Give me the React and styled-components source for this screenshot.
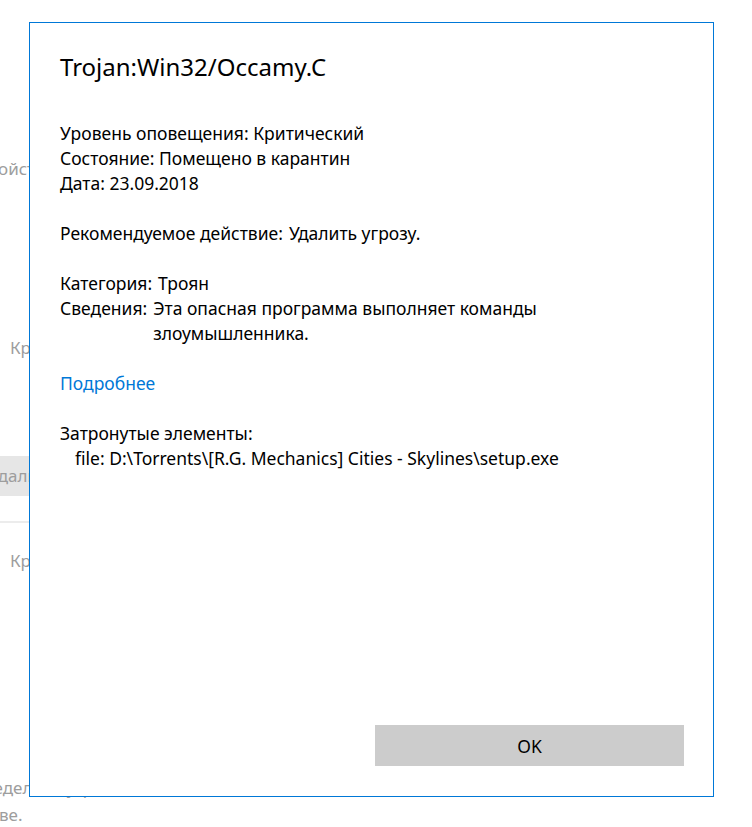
import React from "react"
import styled, { createGlobalStyle } from "styled-components"

const GlobalStyle = createGlobalStyle`
  html, body {
    margin: 0;
    padding: 0;
    background: #ffffff;
  }
  body {
    font-family: "Noto Sans", "Open Sans", "Liberation Sans", sans-serif;
  }
`

const Screen = styled.div`
  position: relative;
  width: 752px;
  height: 827px;
  overflow: hidden;
  background: #ffffff;
`

/* the window that sits behind the dialog */
const Backdrop = styled.div`
  display: flex;
  flex-direction: column;
  width: 300px;
  padding-top: 158px;
`

const BackText = styled.div`
  font-size: 17px;
  line-height: 22px;
  color: #9d9d9d;
  white-space: nowrap;
  margin-top: ${(p) => p.$gap || 0}px;
  margin-left: ${(p) => p.$indent || 0}px;
`

const BackBand = styled.div`
  margin-top: ${(p) => p.$gap || 0}px;
  height: 40px;
  display: flex;
  align-items: center;
  background: #e6e6e6;
`

const BackRule = styled.div`
  margin-top: ${(p) => p.$gap || 0}px;
  height: 2px;
  background: #ececec;
`

const Dialog = styled.div`
  position: absolute;
  left: 29px;
  top: 22px;
  width: 685px;
  height: 775px;
  box-sizing: border-box;
  border: 1px solid #0078d7;
  background: #ffffff;
  padding: 28px 29px 30px 30px;
  display: flex;
  flex-direction: column;
  color: #000000;
`

const Title = styled.h1`
  margin: 0;
  font-size: 24px;
  font-weight: 400;
  line-height: 32px;
`

const Body = styled.div`
  margin-top: 38px;
  font-size: 17.5px;
  line-height: 25px;
  display: flex;
  flex-direction: column;
  gap: 25px;
`

const Section = styled.div`
  display: flex;
  flex-direction: column;
`

const Field = styled.div`
  display: flex;
  align-items: flex-start;
  gap: 6px;
  padding-left: ${(p) => p.$indent || 0}px;
`

const Value = styled.span`
  max-width: 440px;
`

const Link = styled.a`
  color: #0078d7;
  text-decoration: none;
  cursor: pointer;
  align-self: flex-start;
`

const Footer = styled.div`
  margin-top: auto;
  display: flex;
  justify-content: flex-end;
`

const OkButton = styled.button`
  width: 309px;
  height: 41px;
  border: none;
  background: #cccccc;
  color: #000000;
  font-family: inherit;
  font-size: 17.5px;
  cursor: pointer;
  &:hover {
    background: #b8b8b8;
  }
`

export default function App() {
  return (
    <Screen>
      <GlobalStyle />
      <Backdrop>
        <BackText $indent={-38}>Устройство</BackText>
        <BackText $gap={157} $indent={10}>Критический</BackText>
        <BackBand $gap={97}>
          <BackText $indent={-11}>Удалить</BackText>
        </BackBand>
        <BackRule $gap={25} />
        <BackText $gap={27} $indent={10}>Критический</BackText>
        <BackText $gap={205} $indent={-40}>Определено угрозы</BackText>
        <BackText $gap={5} $indent={-1}>ве.</BackText>
      </Backdrop>

      <Dialog role="dialog">
        <Title>Trojan:Win32/Occamy.C</Title>
        <Body>
          <Section>
            <span>Уровень оповещения: Критический</span>
            <span>Состояние: Помещено в карантин</span>
            <span>Дата: 23.09.2018</span>
          </Section>
          <Section>
            <Field>
              <span>Рекомендуемое действие:</span>
              <span>Удалить угрозу.</span>
            </Field>
          </Section>
          <Section>
            <Field>
              <span>Категория:</span>
              <span>Троян</span>
            </Field>
            <Field>
              <span>Сведения:</span>
              <Value>Эта опасная программа выполняет команды злоумышленника.</Value>
            </Field>
          </Section>
          <Section>
            <Link>Подробнее</Link>
          </Section>
          <Section>
            <span>Затронутые элементы:</span>
            <Field $indent={15}>
              <span>file: D:\Torrents\[R.G. Mechanics] Cities - Skylines\setup.exe</span>
            </Field>
          </Section>
        </Body>
        <Footer>
          <OkButton>OK</OkButton>
        </Footer>
      </Dialog>
    </Screen>
  )
}
